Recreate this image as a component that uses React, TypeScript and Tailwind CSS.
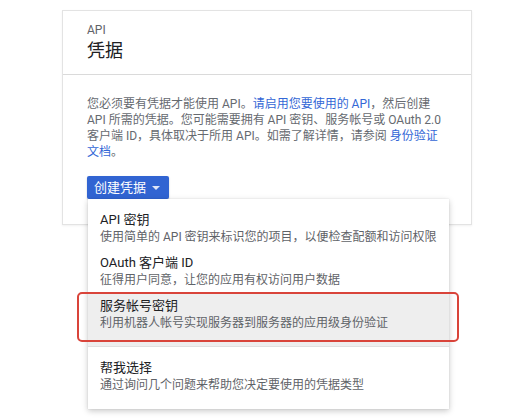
function MenuItem({ title, desc, className }: { title: string; desc: string; className?: string }) {
  return (
    <div className={"px-[12px] " + (className ?? "py-[5px]")}>
      <div className="text-[13px] leading-4 text-[#202124]">{title}</div>
      <div className="mt-[1px] text-[12px] leading-4 text-[#5f6368]">{desc}</div>
    </div>
  );
}

export default function App() {
  return (
    <div
      className="min-h-screen bg-white pt-[10px]"
      style={{ fontFamily: 'Roboto, "Noto Sans CJK SC", sans-serif' }}
    >
      <div className="relative ml-[62px] w-[410px] border border-[#e3e3e3] bg-white shadow-[0_1px_2px_rgba(0,0,0,0.06)]">
        <div className="border-b border-[#dadada] px-6 pt-[11px] pb-[11px]">
          <div className="text-[12px] leading-4 text-[#5f6368]">API</div>
          <div className="mt-[1px] text-[18px] leading-6 text-[#202124]">凭据</div>
        </div>

        <div className="px-6 pt-[21px] pb-[25px]">
          <p className="w-[362px] text-[12px] leading-4 text-[#666a70]">
            您必须要有凭据才能使用 API。<span className="text-[#3367d6]">请启用您要使用的 API</span>，然后创建
            API 所需的凭据。您可能需要拥有 API 密钥、服务帐号或 OAuth 2.0
            客户端 ID，具体取决于所用 API。如需了解详情，请参阅 <span className="text-[#3367d6]">身份验证文档</span>。
          </p>

          <div className="relative mt-[16px]">
            <button className="flex h-[23px] items-center gap-[5px] rounded-[2px] bg-[#3164d2] pl-[7px] pr-[9px] text-[13px] text-white shadow-[0_1px_2px_rgba(0,0,0,0.2)]">
              创建凭据
              <svg width="8" height="4" viewBox="0 0 8 4" className="ml-[1px]">
                <path d="M0 0h8L4 4z" fill="#dfe6f7" />
              </svg>
            </button>

            <div className="absolute left-[1px] top-[23px] z-10 w-[361px] bg-white pt-[8px] pb-[11px] shadow-[0_2px_6px_rgba(0,0,0,0.22),0_0_1px_rgba(0,0,0,0.15)]">
              <MenuItem title="API 密钥" desc="使用简单的 API 密钥来标识您的项目，以便检查配额和访问权限" />
              <MenuItem title="OAuth 客户端 ID" desc="征得用户同意，让您的应用有权访问用户数据" />
              <MenuItem
                title="服务帐号密钥"
                desc="利用机器人帐号实现服务器到服务器的应用级身份验证"
                className="bg-[#eeeeee] pt-[5px] pb-[15px]"
              />
              <div className="h-px bg-[#e0e0e0]" />
              <MenuItem title="帮我选择" desc="通过询问几个问题来帮助您决定要使用的凭据类型" className="pt-[13px] pb-[5px]" />

              <div className="absolute left-[-11px] top-[93px] h-[50px] w-[382px] rounded-[5px] border-2 border-[#d9443a]" />
            </div>
          </div>
        </div>
      </div>
    </div>
  );
}
